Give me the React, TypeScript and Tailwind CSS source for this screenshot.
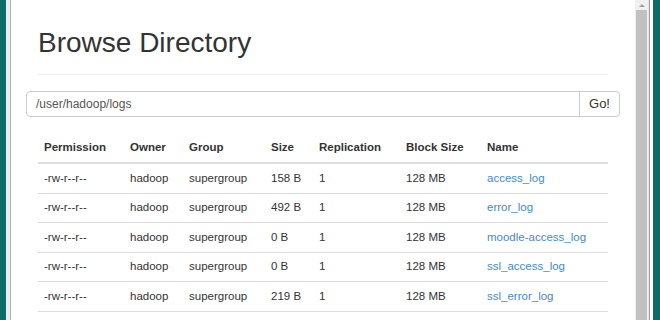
import React from "react";

const rows = [
  { perm: "-rw-r--r--", owner: "hadoop", group: "supergroup", size: "158 B", rep: "1", block: "128 MB", name: "access_log" },
  { perm: "-rw-r--r--", owner: "hadoop", group: "supergroup", size: "492 B", rep: "1", block: "128 MB", name: "error_log" },
  { perm: "-rw-r--r--", owner: "hadoop", group: "supergroup", size: "0 B", rep: "1", block: "128 MB", name: "moodle-access_log" },
  { perm: "-rw-r--r--", owner: "hadoop", group: "supergroup", size: "0 B", rep: "1", block: "128 MB", name: "ssl_access_log" },
  { perm: "-rw-r--r--", owner: "hadoop", group: "supergroup", size: "219 B", rep: "1", block: "128 MB", name: "ssl_error_log" },
];

const cols = ["w-[86px]", "w-[59px]", "w-[82px]", "w-[48px]", "w-[87px]", "w-[81px]", "flex-1"];

export default function App() {
  return (
    <div className="w-[660px] h-[320px] flex bg-[#0f6a6a] overflow-hidden font-['Liberation_Sans',Arial,sans-serif] text-[#333]">
      {/* window frame left */}
      <div className="w-[6px] shrink-0" />
      <div className="w-[4px] shrink-0 bg-[#ececec]" />
      <div className="w-[1px] shrink-0 bg-[#b4b4b4]" />

      {/* page */}
      <div className="flex-1 bg-white pl-[15px] pr-[15px]">
        <div className="pl-[12px] pr-[12px] pt-[28px]">
          <h1 className="text-[28px] leading-[30px] font-normal text-[#333]">Browse Directory</h1>
          <div className="mt-[16px] h-px bg-[#eeeeee]" />
        </div>

        <div className="mt-[16px] flex h-[26px] rounded-[4px] border border-[#cccccc]">
          <div className="flex-1 flex items-center pl-[9px] text-[12px] text-[#555]">/user/hadoop/logs</div>
          <div className="w-[40px] flex items-center justify-center border-l border-[#cccccc] text-[13px] text-[#333]">Go!</div>
        </div>

        <div className="mx-[12px] mt-[17px] text-[11.5px]">
          <div className="flex h-[30px] items-center font-bold border-b-2 border-[#dddddd]">
            {["Permission", "Owner", "Group", "Size", "Replication", "Block Size", "Name"].map((h, i) => (
              <div key={h} className={`${cols[i]} pl-[6px]`}>{h}</div>
            ))}
          </div>
          {rows.map((r, idx) => (
            <div key={idx} className="flex h-[29.5px] items-center border-b border-[#dddddd]">
              <div className={`${cols[0]} pl-[6px]`}>{r.perm}</div>
              <div className={`${cols[1]} pl-[6px]`}>{r.owner}</div>
              <div className={`${cols[2]} pl-[6px]`}>{r.group}</div>
              <div className={`${cols[3]} pl-[6px]`}>{r.size}</div>
              <div className={`${cols[4]} pl-[6px]`}>{r.rep}</div>
              <div className={`${cols[5]} pl-[6px]`}>{r.block}</div>
              <div className={`${cols[6]} pl-[6px] text-[#428bca]`}>{r.name}</div>
            </div>
          ))}
        </div>
      </div>

      {/* scrollbar */}
      <div className="w-[13px] shrink-0 bg-[#f0f0f0] flex flex-col items-center">
        <div className="h-[10px] flex items-center justify-center">
          <div className="w-0 h-0 border-l-[3px] border-r-[3px] border-b-[3px] border-l-transparent border-r-transparent border-b-[#a3a3a3]" />
        </div>
        <div className="w-[11px] flex-1 bg-[#c1c1c1]" />
      </div>
      <div className="w-[1px] shrink-0 bg-[#e6e6e6]" />
      <div className="w-[1px] shrink-0 bg-[#9e9e9e]" />
      <div className="w-[3px] shrink-0 bg-white" />
      <div className="w-[7px] shrink-0" />
    </div>
  );
}
